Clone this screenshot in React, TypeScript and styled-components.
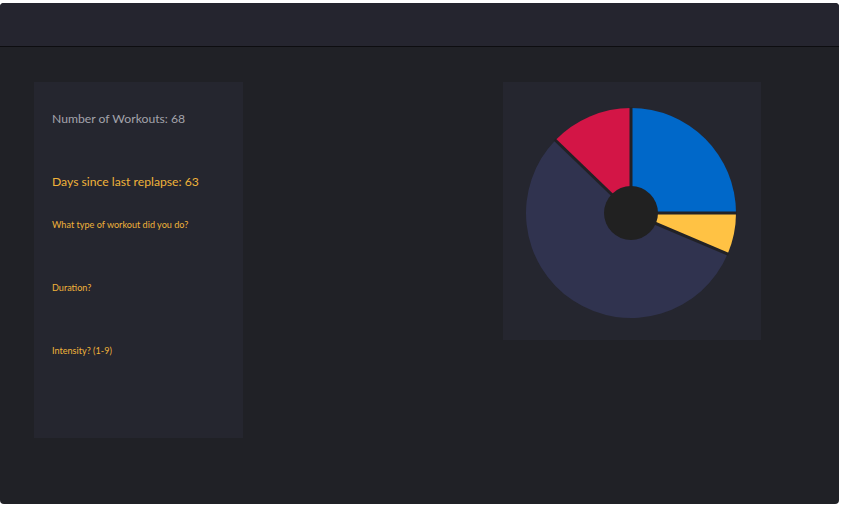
import React from "react";
import styled, { createGlobalStyle } from "styled-components";

const Global = createGlobalStyle`
  html, body { margin: 0; padding: 0; background: #ffffff; }
  body { font-family: "Lato", "Open Sans", sans-serif; }
`;

const Window = styled.div`
  margin-top: 3px;
  width: 839px;
  height: 501px;
  background: #202126;
  border-radius: 4px;
  overflow: hidden;
  display: flex;
  flex-direction: column;
`;

const TopBar = styled.header`
  height: 43px;
  flex: none;
  background: #25252f;
  border-bottom: 1px solid #0d0d10;
`;

const Main = styled.main`
  display: flex;
  align-items: flex-start;
  gap: 260px;
  padding: 35px 0 0 34px;
`;

const StatsCard = styled.section`
  width: 209px;
  height: 356px;
  box-sizing: border-box;
  background: #25262f;
  padding: 29px 18px 0;
  display: flex;
  flex-direction: column;
`;

const Stat = styled.div<{ $color: string; $after: number }>`
  font-size: 12.2px;
  line-height: 16px;
  height: 16px;
  color: ${(p) => p.$color};
  margin-bottom: ${(p) => p.$after}px;
  white-space: nowrap;
`;

const Question = styled.label`
  display: block;
  font-size: 9.1px;
  line-height: 12px;
  height: 63px;
  color: #f0b33a;
  white-space: nowrap;
`;

const ChartCard = styled.section`
  width: 258px;
  height: 258px;
  background: #25262f;
  display: flex;
  align-items: center;
  justify-content: center;
`;

const data = [
  { value: 25, color: "#0068c9" },
  { value: 6.4, color: "#ffc244" },
  { value: 55.8, color: "#30334f" },
  { value: 12.8, color: "#d31546" },
];

function Pie() {
  const total = data.reduce((s, d) => s + d.value, 0);
  const cx = 128, cy = 131, r = 105;
  const pt = (a: number, rr: number) => [cx + rr * Math.sin(a), cy - rr * Math.cos(a)];
  let acc = 0;
  const slices = data.map((d) => {
    const a0 = (acc / total) * Math.PI * 2;
    acc += d.value;
    const a1 = (acc / total) * Math.PI * 2;
    return { ...d, a0, a1 };
  });
  return (
    <svg width="258" height="258" viewBox="0 0 258 258">
      {slices.map((s, i) => {
        const [x0, y0] = pt(s.a0, r);
        const [x1, y1] = pt(s.a1, r);
        const large = s.a1 - s.a0 > Math.PI ? 1 : 0;
        return (
          <path
            key={i}
            d={`M${cx},${cy} L${x0},${y0} A${r},${r} 0 ${large} 1 ${x1},${y1} Z`}
            fill={s.color}
          />
        );
      })}
      {slices.map((s, i) => {
        const [x, y] = pt(s.a0, r + 1);
        return <line key={i} x1={cx} y1={cy} x2={x} y2={y} stroke="#212126" strokeWidth={3} />;
      })}
      <circle cx={cx} cy={cy} r={27} fill="#212121" />
    </svg>
  );
}

export default function App() {
  return (
    <>
      <Global />
      <Window>
        <TopBar />
        <Main>
          <StatsCard>
            <Stat $color="#a3a3ab" $after={47}>Number of Workouts: 68</Stat>
            <Stat $color="#f0b33a" $after={29}>Days since last replapse: 63</Stat>
            <Question>What type of workout did you do?</Question>
            <Question>Duration?</Question>
            <Question>Intensity? (1-9)</Question>
          </StatsCard>
          <ChartCard>
            <Pie />
          </ChartCard>
        </Main>
      </Window>
    </>
  );
}
